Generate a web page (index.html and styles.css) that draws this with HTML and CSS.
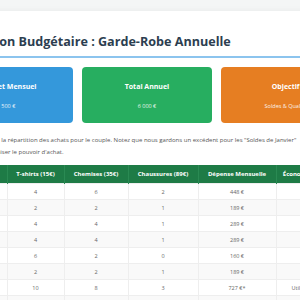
FILE: index.html
```html
<!DOCTYPE html>
<html lang="fr">

<head>
    <meta charset="UTF-8">
    <meta name="viewport" content="width=device-width, initial-scale=1.0">
    <title>Répartition Budgétaire</title>
    <link rel="stylesheet" href="styles.css">
</head>

<body>
    <div class="page">
        <div class="container">
            <h1 class="title">Répartition Budgétaire : Garde-Robe Annuelle</h1>

            <!-- Summary cards -->
            <div class="cards">
                <div class="card card-blue">
                    <div class="card-title">Budget Mensuel</div>
                    <div class="card-value">500 €</div>
                </div>
                <div class="card card-green">
                    <div class="card-title">Total Annuel</div>
                    <div class="card-value">6 000 €</div>
                </div>
                <div class="card card-orange">
                    <div class="card-title">Objectif</div>
                    <div class="card-value">Soldes &amp; Qualité</div>
                </div>
            </div>

            <p class="intro">Ce tableau présente la répartition des achats pour le couple. Notez que nous gardons un excédent pour les "Soldes de Janvier"<br>
                et ainsi mieux optimiser le pouvoir d'achat.</p>

            <table class="budget">
                <colgroup>
                    <col class="c-month">
                    <col class="c-tshirt">
                    <col class="c-shirt">
                    <col class="c-shoes">
                    <col class="c-spend">
                    <col class="c-save">
                </colgroup>
                <thead>
                    <tr>
                        <th>Mois</th>
                        <th>T-shirts (15€)</th>
                        <th>Chemises (35€)</th>
                        <th>Chaussures (89€)</th>
                        <th>Dépense Mensuelle</th>
                        <th>Économie Mensuelle</th>
                    </tr>
                </thead>
                <tbody>
                    <tr><td>Janvier</td><td>4</td><td>6</td><td>2</td><td>448 €</td><td>52 €</td></tr>
                    <tr><td>Février</td><td>2</td><td>2</td><td>1</td><td>189 €</td><td>311 €</td></tr>
                    <tr><td>Mars</td><td>4</td><td>4</td><td>1</td><td>289 €</td><td>211 €</td></tr>
                    <tr><td>Avril</td><td>4</td><td>4</td><td>1</td><td>289 €</td><td>211 €</td></tr>
                    <tr><td>Mai</td><td>6</td><td>2</td><td>0</td><td>160 €</td><td>340 €</td></tr>
                    <tr><td>Juin</td><td>2</td><td>2</td><td>1</td><td>189 €</td><td>311 €</td></tr>
                    <tr><td>Juillet</td><td>10</td><td>8</td><td>3</td><td>727 €*</td><td>Utilisation Soldes</td></tr>
                    <tr><td>Août</td><td>2</td><td>2</td><td>1</td><td>189 €</td><td>311 €</td></tr>
                </tbody>
            </table>
        </div>
    </div>
</body>

</html>
```

FILE: styles.css
```css
body {
    margin: 0;
    background-color: #f4f6f6;
    font-family: "Open Sans", "Liberation Sans", sans-serif;
    color: #333;
}

.page {
    display: flex;
    justify-content: center;
    padding: 11px 6px 0 0;
}

.container {
    flex: 0 0 auto;
    width: 407px;
    padding: 22px 30px 20px;
    background-color: #fff;
    box-shadow: 0 0 6px rgba(0, 0, 0, 0.06);
}

.title {
    margin: 0;
    padding-bottom: 5px;
    font-size: 12.6px;
    line-height: 18px;
    font-weight: bold;
    color: #2c3e50;
    border-bottom: 2px solid #8cc4ee;
}

.cards {
    display: grid;
    grid-template-columns: repeat(3, 1fr);
    gap: 9px;
    margin-top: 9px;
}

.card {
    padding: 15px 8px 13px;
    border-radius: 4px;
    color: #fff;
    text-align: center;
}

.card-blue {
    background-color: #3498db;
}

.card-green {
    background-color: #27ae60;
}

.card-orange {
    background-color: #e67e22;
}

.card-title {
    font-size: 7px;
    line-height: 10px;
    font-weight: bold;
}

.card-value {
    margin-top: 10px;
    font-size: 5.5px;
    line-height: 8px;
    opacity: 0.9;
}

.intro {
    margin: 12px 0 7px;
    font-size: 6px;
    line-height: 11.5px;
    color: #555;
}

.budget {
    width: 100%;
    border-collapse: collapse;
    table-layout: fixed;
    font-size: 5.5px;
}

.c-month { width: 63px; }
.c-tshirt { width: 57px; }
.c-shirt { width: 64px; }
.c-shoes { width: 70px; }
.c-spend { width: 78px; }
.c-save { width: 75px; }

.budget th {
    height: 18px;
    padding: 0;
    background-color: #1e7b46;
    color: #fff;
    font-size: 6px;
    font-weight: bold;
    border-right: 1px solid #2a8a53;
    white-space: nowrap;
}

.budget td {
    height: 15px;
    padding: 0;
    text-align: center;
    color: #666;
    border: 1px solid #eee;
    white-space: nowrap;
}

.budget tbody tr:nth-child(even) td {
    background-color: #f9f9f9;
}
```
